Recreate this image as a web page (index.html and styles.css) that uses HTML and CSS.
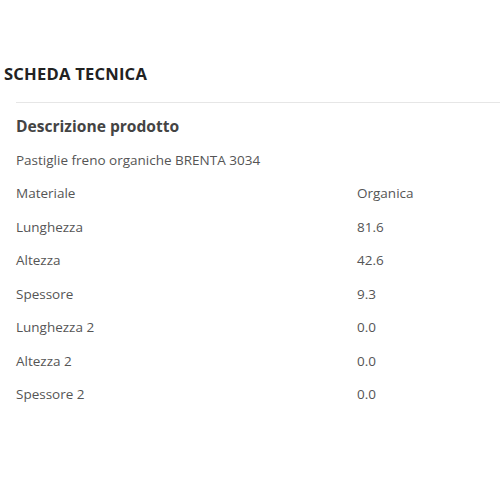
FILE: index.html
```html
<!DOCTYPE html>
<html lang="it">
<head>
<meta charset="utf-8">
<title>Scheda tecnica</title>
<link rel="stylesheet" href="styles.css">
</head>
<body>
<section class="sheet">
  <h2 class="sheet-title">SCHEDA TECNICA</h2>
  <div class="sheet-body">
    <h3 class="desc-title">Descrizione prodotto</h3>
    <p class="desc-text">Pastiglie freno organiche BRENTA 3034</p>
    <dl class="specs">
      <dt>Materiale</dt><dd>Organica</dd>
      <dt>Lunghezza</dt><dd>81.6</dd>
      <dt>Altezza</dt><dd>42.6</dd>
      <dt>Spessore</dt><dd>9.3</dd>
      <dt>Lunghezza 2</dt><dd>0.0</dd>
      <dt>Altezza 2</dt><dd>0.0</dd>
      <dt>Spessore 2</dt><dd>0.0</dd>
    </dl>
  </div>
</section>
</body>
</html>
```
FILE: styles.css
```css
html, body {
  margin: 0;
  padding: 0;
  background: #fff;
}
body {
  font-family: "Open Sans", "Liberation Sans", sans-serif;
  color: #555;
}
.sheet {
  padding-top: 64px;
}
.sheet-title {
  margin: 0 0 0 4px;
  font-size: 16.6px;
  line-height: 20px;
  font-weight: 700;
  color: #222;
  letter-spacing: 0.2px;
}
.sheet-body {
  margin: 18px 0 0 16px;
  border-top: 1px solid #e6e6e6;
}
.desc-title {
  margin: 13px 0 0 0;
  font-size: 15.6px;
  line-height: 20px;
  font-weight: 700;
  color: #444;
}
.desc-text {
  margin: 15px 0 0 0;
  font-size: 13.5px;
  line-height: 18px;
}
.specs {
  margin: 15px 0 0 0;
  display: grid;
  grid-template-columns: 341px 1fr;
  row-gap: 15.5px;
  font-size: 13.5px;
  line-height: 18px;
}
.specs dt, .specs dd {
  margin: 0;
}
```
